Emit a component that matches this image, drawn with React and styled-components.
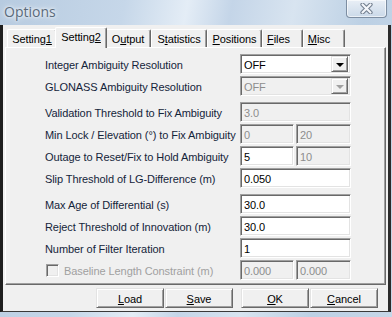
import React from 'react';
import styled, { createGlobalStyle } from 'styled-components';

const GlobalStyle = createGlobalStyle`
  html, body {
    margin: 0;
    padding: 0;
    overflow: hidden;
    background: #ffffff;
  }
`;

const setColor = {
  face: '#f0f0f0',
  light: '#e3e3e3',
  shadow: '#a0a0a0',
  dark: '#696969',
  text: '#14243a',
  disabled: '#a0a0a0',
  glass: 'linear-gradient(100deg, #b7cbe0 0%, #c6d7e9 28%, #e4edf6 42%, #c4d5e8 52%, #d8e4f0 66%, #bcd0e4 82%, #c7d7e8 100%)',
};

const Window = styled.div`
  width: 392px;
  height: 317px;
  display: flex;
  flex-direction: column;
  box-sizing: border-box;
  padding: 0 1px 5px 0;
  background: ${setColor.glass};
  font-family: "Liberation Sans", Arial, sans-serif;
  font-size: 11px;
  letter-spacing: -0.08px;
  color: #000;
`;

const TitleBar = styled.div`
  height: 25px;
  flex: none;
  display: flex;
  justify-content: space-between;
  align-items: flex-start;
`;

const Title = styled.div`
  padding: 2px 0 0 4px;
  font-family: "Open Sans", "Noto Sans", sans-serif;
  font-size: 14px;
  letter-spacing: 0;
  color: #5a6a7b;
  text-shadow: 0 0 6px #ffffff, 0 0 3px #ffffff;
`;

const CloseButton = styled.div`
  width: 41px;
  height: 18px;
  margin-right: 4px;
  box-sizing: border-box;
  border: 1px solid #7d8ea2;
  border-top: none;
  border-radius: 0 0 4px 4px;
  background: linear-gradient(#e9eff6, rgba(210, 222, 235, 0.6));
  box-shadow: inset 0 0 0 1px rgba(255, 255, 255, 0.6);
  display: flex;
  align-items: center;
  justify-content: center;
`;

const Client = styled.div`
  flex: 1;
  display: flex;
  flex-direction: column;
  background: ${setColor.face};
  border-left: 3px solid #1e1e1e;
  border-right: 3px solid #2b2b2b;
  border-bottom: 1px solid #3a3a3a;
`;

const TabStrip = styled.div`
  height: 22px;
  flex: none;
  display: flex;
  align-items: flex-end;
  padding-left: 4px;
`;

const Tab = styled.div`
  position: relative;
  width: ${({ $w }) => $w}px;
  height: ${({ $active }) => ($active ? 21 : 18)}px;
  margin: 0 ${({ $active }) => ($active ? -2 : 0)}px ${({ $active }) => ($active ? -1 : 0)}px;
  z-index: ${({ $active }) => ($active ? 2 : 1)};
  box-sizing: border-box;
  border-top: 1px solid #ffffff;
  border-left: 1px solid #ffffff;
  border-right: 1px solid ${setColor.dark};
  border-radius: 2px 2px 0 0;
  box-shadow: inset -1px 0 0 ${setColor.shadow};
  background: ${setColor.face};
  display: flex;
  align-items: center;
  justify-content: center;
  padding-bottom: ${({ $active }) => ($active ? 3 : 0)}px;
  padding-right: ${({ $pad }) => $pad || 0}px;
`;

const Panel = styled.div`
  flex: none;
  height: 238px;
  margin: 0 2px;
  box-sizing: border-box;
  border: 1px solid;
  border-color: #ffffff ${setColor.dark} ${setColor.dark} #ffffff;
  box-shadow: inset -1px -1px 0 ${setColor.shadow};
  padding: 6px 0 0 39px;
  display: flex;
  flex-direction: column;
  gap: 2px;
`;

const Row = styled.div`
  display: grid;
  grid-template-columns: 195px 111px;
  align-items: center;
  height: 20px;
  margin-top: ${({ $gap }) => ($gap ? 4 : 0)}px;
`;

const Label = styled.div`
  color: ${({ $disabled }) => ($disabled ? setColor.disabled : setColor.text)};
  white-space: nowrap;
  display: flex;
  align-items: center;
  padding-top: 2px;
`;

const Pair = styled.div`
  display: grid;
  grid-template-columns: 54px 55px;
  gap: 2px;
`;

const TextBox = styled.div`
  height: 20px;
  box-sizing: border-box;
  border: 1px solid;
  border-color: ${setColor.shadow} #ffffff #ffffff ${setColor.shadow};
  box-shadow: inset 1px 1px 0 ${setColor.dark}, inset -1px -1px 0 ${setColor.light};
  background: ${({ $disabled }) => ($disabled ? setColor.face : '#ffffff')};
  color: ${({ $disabled }) => ($disabled ? '#8d8d8d' : '#000')};
  padding: 1px 3px 0;
  display: flex;
  align-items: center;
`;

const Combo = styled(TextBox)`
  justify-content: space-between;
  padding: 0 2px 0 3px;
`;

const ComboText = styled.span`
  padding-top: 1px;
`;

const DropButton = styled.div`
  width: 17px;
  height: 16px;
  box-sizing: border-box;
  border: 1px solid;
  border-color: ${setColor.light} ${setColor.dark} ${setColor.dark} ${setColor.light};
  box-shadow: inset 1px 1px 0 #ffffff, inset -1px -1px 0 ${setColor.shadow};
  background: ${setColor.face};
  display: flex;
  align-items: center;
  justify-content: center;
`;

const Arrow = styled.div`
  width: 0;
  height: 0;
  border-left: 4px solid transparent;
  border-right: 4px solid transparent;
  border-top: 4px solid ${({ $disabled }) => ($disabled ? setColor.disabled : '#000')};
  margin-top: 1px;
`;

const CheckBox = styled.div`
  width: 13px;
  height: 13px;
  box-sizing: border-box;
  margin: -2px 5px 0 1px;
  border: 1px solid;
  border-color: ${setColor.shadow} #ffffff #ffffff ${setColor.shadow};
  box-shadow: inset 1px 1px 0 ${setColor.dark}, inset -1px -1px 0 ${setColor.light};
  background: ${setColor.face};
`;

const ButtonBar = styled.div`
  flex: 1;
  display: flex;
  align-items: center;
  justify-content: flex-end;
  padding-right: 10px;
`;

const ButtonGroup = styled.div`
  display: flex;
  gap: 1px;
  margin-left: ${({ $ml }) => $ml || 0}px;
`;

const Button = styled.div`
  width: 68px;
  height: 20px;
  box-sizing: border-box;
  border: 1px solid;
  border-color: ${setColor.light} ${setColor.dark} ${setColor.dark} ${setColor.light};
  box-shadow: inset 1px 1px 0 #ffffff, inset -1px -1px 0 ${setColor.shadow};
  background: ${setColor.face};
  display: flex;
  align-items: center;
  justify-content: center;
  padding-top: 1px;
`;

const tabs = [
  { w: 50, label: <>Setting<u>1</u></> },
  { w: 52, label: <>Setting<u>2</u></>, active: true },
  { w: 46, label: <>O<u>u</u>tput</> },
  { w: 56, label: <>S<u>t</u>atistics</> },
  { w: 55, label: <><u>P</u>ositions</> },
  { w: 41, label: <><u>F</u>iles</>, pad: 8 },
  { w: 42, label: <><u>M</u>isc</>, pad: 10 },
];

const CloseGlyph = () => (
  <svg width="13" height="11" viewBox="0 0 13 11">
    <path d="M2.5 1.5 L10.5 9.5 M10.5 1.5 L2.5 9.5" stroke="#6f7c8c" strokeWidth="4.2" strokeLinecap="round" />
    <path d="M2.5 1.5 L10.5 9.5 M10.5 1.5 L2.5 9.5" stroke="#f4f7fb" strokeWidth="2.2" strokeLinecap="round" />
  </svg>
);

const ComboBox = ({ value, disabled }) => (
  <Combo $disabled={disabled}>
    <ComboText>{value}</ComboText>
    <DropButton>
      <Arrow $disabled={disabled} />
    </DropButton>
  </Combo>
);

export default function App() {
  return (
    <>
      <GlobalStyle />
      <Window>
        <TitleBar>
          <Title>Options</Title>
          <CloseButton>
            <CloseGlyph />
          </CloseButton>
        </TitleBar>
        <Client>
          <TabStrip>
            {tabs.map((t, i) => (
              <Tab key={i} $w={t.w} $active={t.active} $pad={t.pad}>
                {t.label}
              </Tab>
            ))}
          </TabStrip>
          <Panel>
            <Row>
              <Label>Integer Ambiguity Resolution</Label>
              <ComboBox value="OFF" />
            </Row>
            <Row>
              <Label>GLONASS Ambiguity Resolution</Label>
              <ComboBox value="OFF" disabled />
            </Row>
            <Row $gap>
              <Label>Validation Threshold to Fix Ambiguity</Label>
              <TextBox $disabled>3.0</TextBox>
            </Row>
            <Row>
              <Label>Min Lock / Elevation (°) to Fix Ambiguity</Label>
              <Pair>
                <TextBox $disabled>0</TextBox>
                <TextBox $disabled>20</TextBox>
              </Pair>
            </Row>
            <Row>
              <Label>Outage to Reset/Fix to Hold Ambiguity</Label>
              <Pair>
                <TextBox>5</TextBox>
                <TextBox $disabled>10</TextBox>
              </Pair>
            </Row>
            <Row>
              <Label>Slip Threshold of LG-Difference (m)</Label>
              <TextBox>0.050</TextBox>
            </Row>
            <Row $gap>
              <Label>Max Age of Differential (s)</Label>
              <TextBox>30.0</TextBox>
            </Row>
            <Row>
              <Label>Reject Threshold of Innovation (m)</Label>
              <TextBox>30.0</TextBox>
            </Row>
            <Row>
              <Label>Number of Filter Iteration</Label>
              <TextBox>1</TextBox>
            </Row>
            <Row>
              <Label $disabled>
                <CheckBox />
                Baseline Length Constraint (m)
              </Label>
              <Pair>
                <TextBox $disabled>0.000</TextBox>
                <TextBox $disabled>0.000</TextBox>
              </Pair>
            </Row>
          </Panel>
          <ButtonBar>
            <ButtonGroup>
              <Button><u>L</u>oad</Button>
              <Button><u>S</u>ave</Button>
            </ButtonGroup>
            <ButtonGroup $ml={8}>
              <Button><u>O</u>K</Button>
              <Button><u>C</u>ancel</Button>
            </ButtonGroup>
          </ButtonBar>
        </Client>
      </Window>
    </>
  );
}
